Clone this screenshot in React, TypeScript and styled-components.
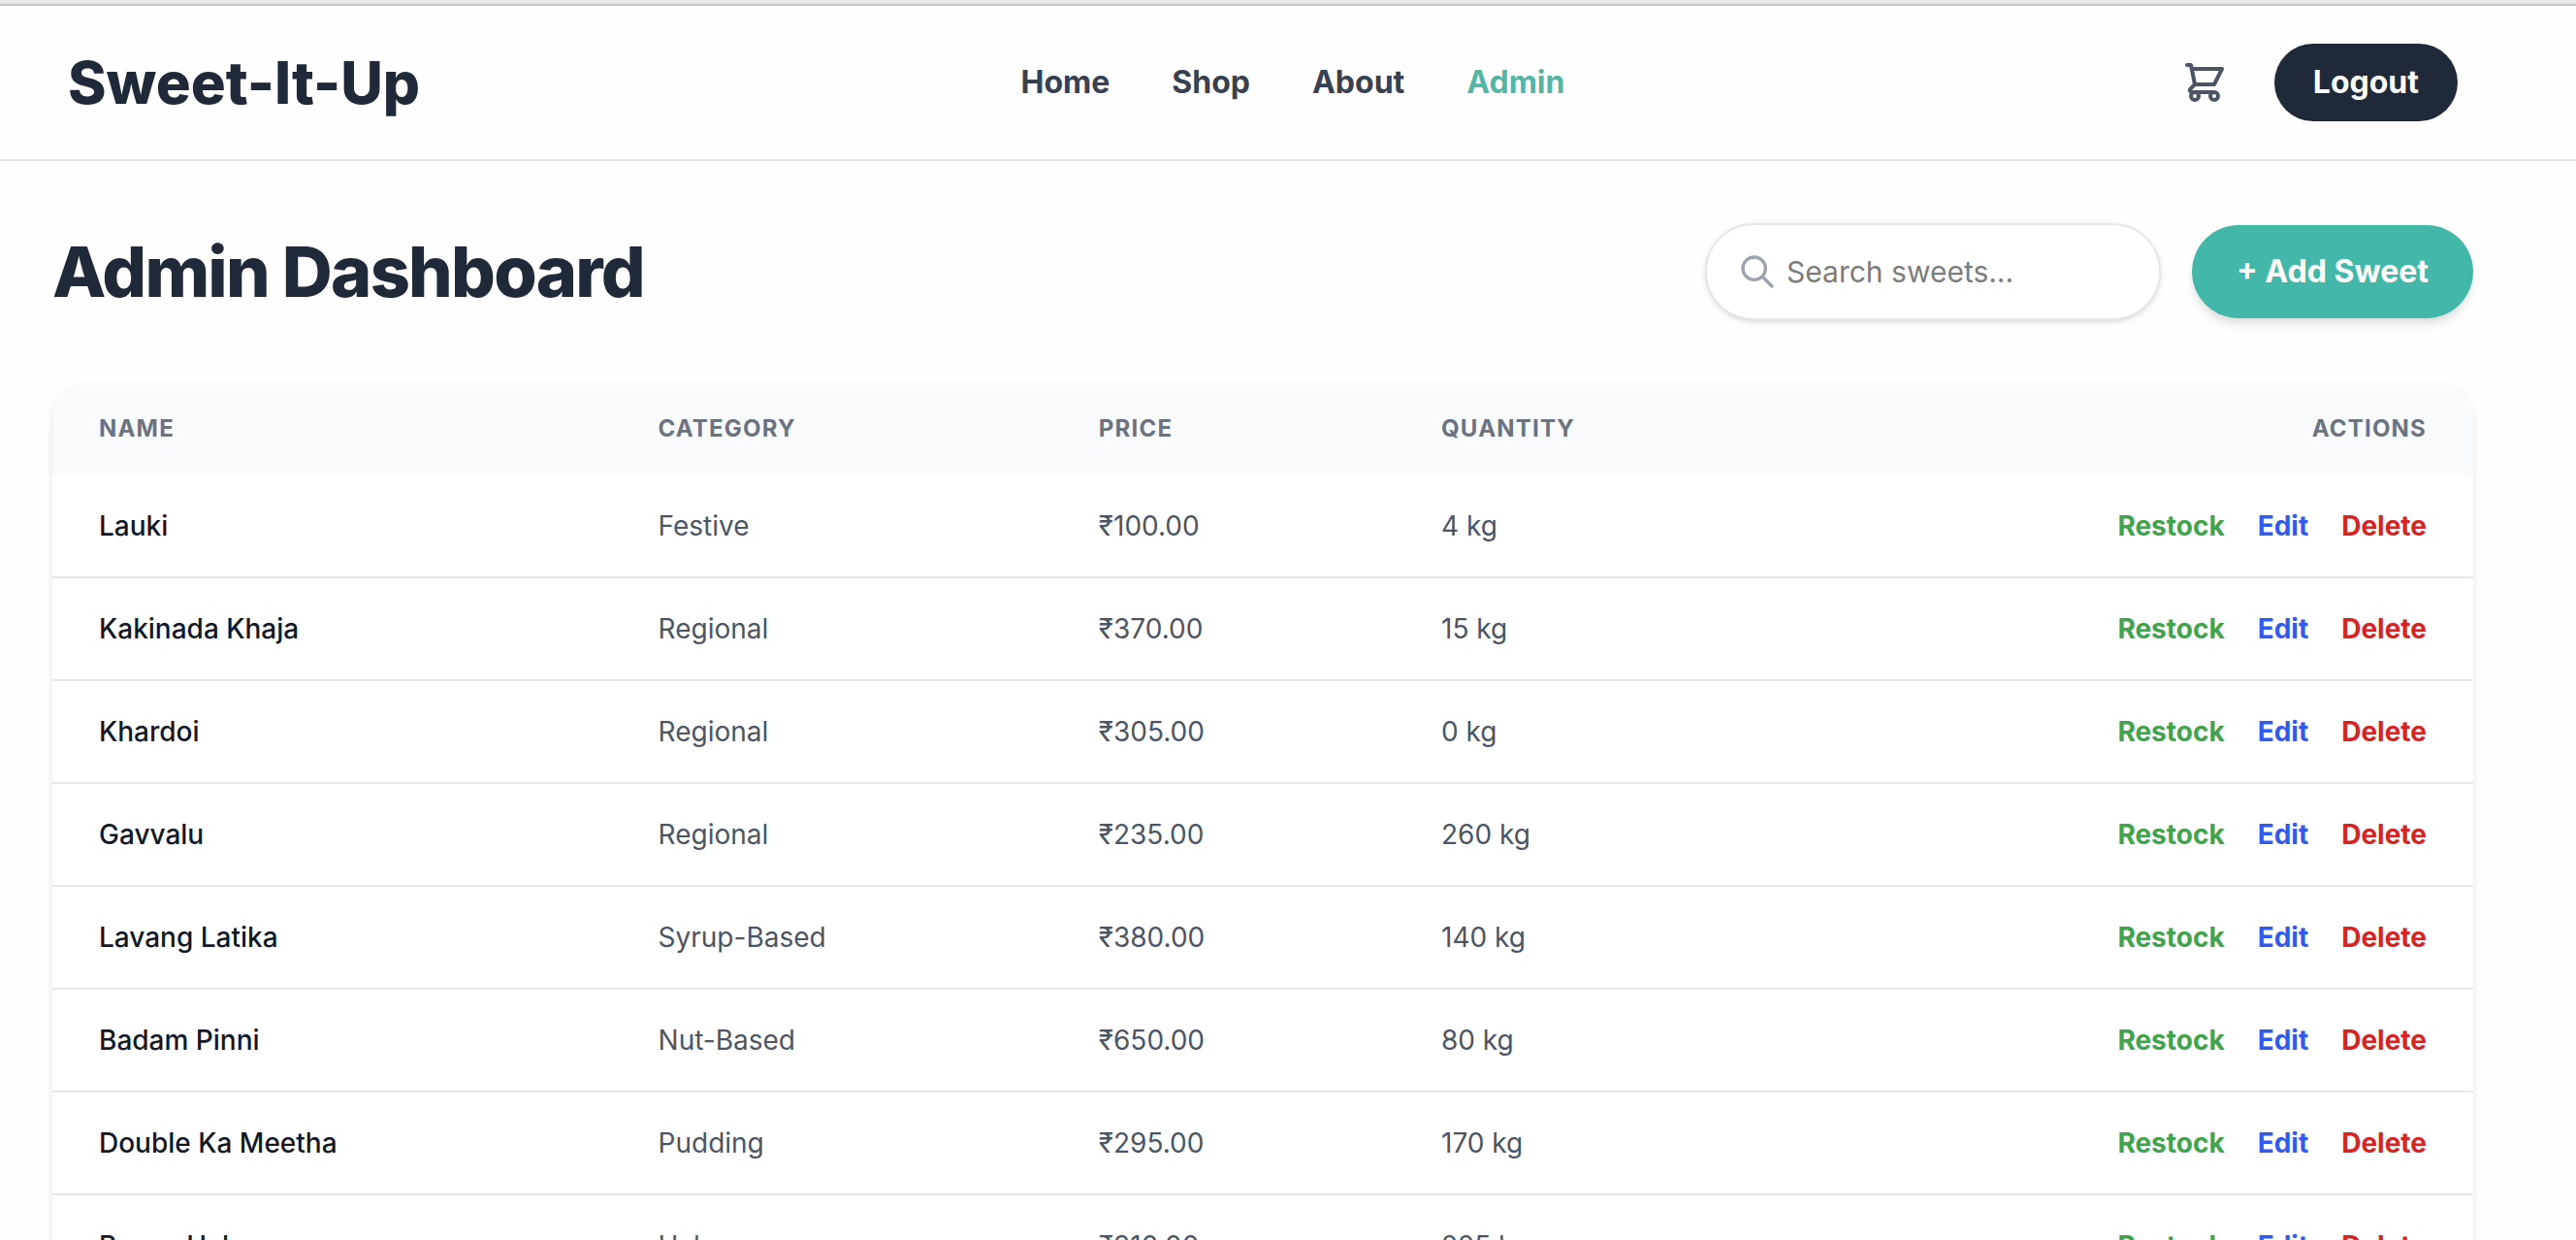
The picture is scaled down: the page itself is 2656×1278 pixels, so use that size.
import React from "react";
import styled, { createGlobalStyle } from "styled-components";

const GlobalStyle = createGlobalStyle`
  *, *::before, *::after { box-sizing: border-box; }
  body {
    margin: 0;
    background: #fefefe;
    color: #1f2937;
    font-family: Inter, "Noto Sans", sans-serif;
    font-size: 32px;
    line-height: 48px;
  }
  html { overflow: hidden; }
  button, input { font: inherit; }
`;

const WindowEdge = styled.div`
  height: 6px;
  background: #e7e7e7;
  border-bottom: 2px solid #c4c4c4;
`;

const Header = styled.header`
  border-bottom: 2px solid #e5e7eb;
  padding-right: 52px;
`;

const HeaderInner = styled.div`
  max-width: 2560px;
  min-height: 158px;
  margin: 0 auto;
  padding: 0 48px;
  display: flex;
  align-items: center;
  justify-content: space-between;
`;

const Logo = styled.a`
  font-size: 60px;
  line-height: 72px;
  font-weight: 800;
  color: #1f2937;
  text-decoration: none;
`;

const Nav = styled.nav`
  display: flex;
  gap: 64px;
`;

const NavLink = styled.a<{ $active?: boolean }>`
  font-weight: 700;
  color: ${(p) => (p.$active ? "#54b5a6" : "#374151")};
  text-decoration: none;
`;

const HeaderActions = styled.div`
  display: flex;
  align-items: center;
  gap: 32px;
`;

const IconButton = styled.button`
  display: flex;
  padding: 16px;
  border: 0;
  background: none;
  color: #4b5563;
  cursor: pointer;
`;

const LogoutButton = styled.button`
  padding: 16px 40px;
  border: 0;
  border-radius: 40px;
  background: #1f2937;
  color: #fff;
  font-weight: 700;
  cursor: pointer;
`;

const Page = styled.main`
  padding-right: 52px;
`;

const Content = styled.div`
  max-width: 2560px;
  margin: 0 auto;
  padding: 64px 32px;
`;

const TitleRow = styled.div`
  display: flex;
  align-items: center;
  justify-content: space-between;
  margin-bottom: 64px;
`;

const Title = styled.h1`
  margin: 0;
  font-size: 72px;
  line-height: 80px;
  font-weight: 800;
  letter-spacing: -0.025em;
`;

const Tools = styled.div`
  display: flex;
  align-items: center;
  gap: 32px;
`;

const SearchBox = styled.label`
  display: flex;
  align-items: center;
  gap: 10px;
  width: 470px;
  padding: 24px 32px;
  border: 2px solid #e5e7eb;
  border-radius: 50px;
  background: #fff;
  color: #9ca3af;
  box-shadow: 0 2px 6px rgba(0, 0, 0, 0.1), 0 2px 4px -2px rgba(0, 0, 0, 0.1);
`;

const SearchInput = styled.input`
  flex: 1;
  min-width: 0;
  height: 48px;
  padding: 0;
  border: 0;
  outline: 0;
  background: none;
  color: #1f2937;
  font-size: 30px;
  &::placeholder { color: #7c7c7c; opacity: 1; }
`;

const AddButton = styled.button`
  padding: 24px 46px;
  border: 0;
  border-radius: 48px;
  background: #44b8a8;
  color: #fff;
  font-weight: 700;
  box-shadow: 0 8px 12px -2px rgba(0, 0, 0, 0.1), 0 4px 8px -4px rgba(0, 0, 0, 0.1);
  cursor: pointer;
`;

const TableCard = styled.div`
  overflow: hidden;
  border-radius: 32px;
  background: #fff;
  box-shadow: 0 8px 12px -2px rgba(0, 0, 0, 0.1), 0 4px 8px -4px rgba(0, 0, 0, 0.1);
`;

const Table = styled.table`
  width: 100%;
  table-layout: fixed;
  border-collapse: separate;
  border-spacing: 0;
  font-size: 28px;
  line-height: 40px;
`;

const Column = styled.col<{ $width?: string }>`
  width: ${(p) => p.$width ?? "auto"};
`;

const HeadCell = styled.th<{ $right?: boolean }>`
  padding: 32px 48px;
  background: #f9fafc;
  color: #6b7280;
  font-size: 24px;
  line-height: 32px;
  font-weight: 700;
  letter-spacing: 0.05em;
  text-transform: uppercase;
  text-align: ${(p) => (p.$right ? "right" : "left")};
`;

const Cell = styled.td<{ $strong?: boolean }>`
  padding: 32px 48px;
  border-bottom: 2px solid #e5e7eb;
  color: ${(p) => (p.$strong ? "#111827" : "#4b5563")};
  font-weight: ${(p) => (p.$strong ? 500 : 400)};
`;

const RowActions = styled.div`
  display: flex;
  justify-content: flex-end;
  gap: 34px;
`;

const RowButton = styled.button<{ $color: string }>`
  padding: 0;
  border: 0;
  background: none;
  color: ${(p) => p.$color};
  font-weight: 700;
  cursor: pointer;
`;

const sweets = [
  { name: "Lauki", category: "Festive", price: 100, quantity: 4 },
  { name: "Kakinada Khaja", category: "Regional", price: 370, quantity: 15 },
  { name: "Khardoi", category: "Regional", price: 305, quantity: 0 },
  { name: "Gavvalu", category: "Regional", price: 235, quantity: 260 },
  { name: "Lavang Latika", category: "Syrup-Based", price: 380, quantity: 140 },
  { name: "Badam Pinni", category: "Nut-Based", price: 650, quantity: 80 },
  { name: "Double Ka Meetha", category: "Pudding", price: 295, quantity: 170 },
  { name: "Besan Halwa", category: "Halwa", price: 310, quantity: 225 },
];

function CartIcon() {
  return (
    <svg width="48" height="48" viewBox="0 0 24 24" fill="none" stroke="currentColor" strokeWidth="2" strokeLinecap="round" strokeLinejoin="round" aria-hidden="true">
      <path d="M3 3h2l.4 2M7 13h10l4-8H5.400M7 13L5.400 5M7 13l-2.293 2.293c-.63.63-.184 1.707.707 1.707H17m0 0a2 2 0 100 4 2 2 0 000-4zm-8 2a2 2 0 11-4 0 2 2 0 014 0z" />
    </svg>
  );
}

function SearchIcon() {
  return (
    <svg width="40" height="40" viewBox="0 0 24 24" fill="none" stroke="currentColor" strokeWidth="2" strokeLinecap="round" strokeLinejoin="round" aria-hidden="true">
      <path d="M21 21l-6-6m2-5a7 7 0 11-14 0 7 7 0 0114 0z" />
    </svg>
  );
}

export default function App() {
  return (
    <>
      <GlobalStyle />
      <WindowEdge />
      <Header>
        <HeaderInner>
          <Logo href="#home">Sweet-It-Up</Logo>
          <Nav>
            <NavLink href="#home">Home</NavLink>
            <NavLink href="#shop">Shop</NavLink>
            <NavLink href="#about">About</NavLink>
            <NavLink href="#admin" $active>Admin</NavLink>
          </Nav>
          <HeaderActions>
            <IconButton type="button" aria-label="Cart">
              <CartIcon />
            </IconButton>
            <LogoutButton type="button">Logout</LogoutButton>
          </HeaderActions>
        </HeaderInner>
      </Header>
      <Page>
        <Content>
          <TitleRow>
            <Title>Admin Dashboard</Title>
            <Tools>
              <SearchBox>
                <SearchIcon />
                <SearchInput type="text" placeholder="Search sweets..." aria-label="Search sweets" />
              </SearchBox>
              <AddButton type="button">+ Add Sweet</AddButton>
            </Tools>
          </TitleRow>
          <TableCard>
            <Table>
              <colgroup>
                <Column $width="23.1%" />
                <Column $width="18.2%" />
                <Column $width="14.15%" />
                <Column />
                <Column />
              </colgroup>
              <thead>
                <tr>
                  <HeadCell scope="col">Name</HeadCell>
                  <HeadCell scope="col">Category</HeadCell>
                  <HeadCell scope="col">Price</HeadCell>
                  <HeadCell scope="col">Quantity</HeadCell>
                  <HeadCell scope="col" $right>Actions</HeadCell>
                </tr>
              </thead>
              <tbody>
                {sweets.map((s) => (
                  <tr key={s.name}>
                    <Cell $strong>{s.name}</Cell>
                    <Cell>{s.category}</Cell>
                    <Cell>{`₹${s.price.toFixed(2)}`}</Cell>
                    <Cell>{`${s.quantity} kg`}</Cell>
                    <Cell>
                      <RowActions>
                        <RowButton type="button" $color="#41a34d">Restock</RowButton>
                        <RowButton type="button" $color="#2f5bf0">Edit</RowButton>
                        <RowButton type="button" $color="#d52422">Delete</RowButton>
                      </RowActions>
                    </Cell>
                  </tr>
                ))}
              </tbody>
            </Table>
          </TableCard>
        </Content>
      </Page>
    </>
  );
}
